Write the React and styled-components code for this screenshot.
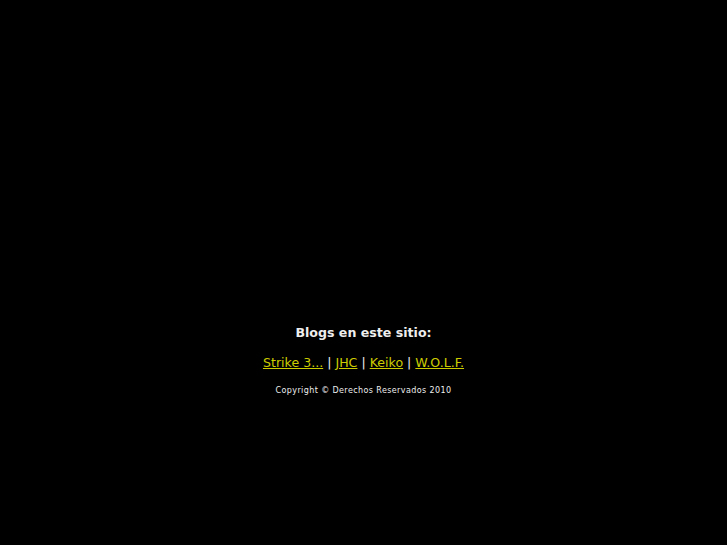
import React from 'react';
import styled, { createGlobalStyle } from 'styled-components';

const Global = createGlobalStyle`
  html, body {
    margin: 0;
    padding: 0;
    background: #000;
    height: 100%;
  }
  #root { min-height: 100%; }
`;

const Pagina = styled.main`
  width: 100%;
  min-height: 545px;
  display: flex;
  flex-direction: column;
  align-items: center;
  padding-top: 323px;
  box-sizing: border-box;
  font-family: "DejaVu Sans", Verdana, sans-serif;
  color: #eeeeee;
`;

const Titulo = styled.h3`
  margin: 0;
  font-size: 12.6px;
  font-weight: bold;
  line-height: 20px;
`;

const Enlaces = styled.p`
  margin: 10px 0 0 0;
  font-size: 12.6px;
  line-height: 20px;
  color: #eeeeee;
`;

const Enlace = styled.a`
  color: #cccc00;
  text-decoration: underline;
`;

const Copy = styled.p`
  margin: 12px 0 0 0;
  font-size: 8px;
  letter-spacing: 0.4px;
  line-height: 12px;
  color: #eeeeee;
`;

const blogs = ['Strike 3...', 'JHC', 'Keiko', 'W.O.L.F.'];

const App = () => (
  <>
    <Global />
    <Pagina>
      <Titulo>Blogs en este sitio:</Titulo>
      <Enlaces>
        {blogs.map((b, i) => (
          <React.Fragment key={b}>
            {i > 0 && ' | '}
            <Enlace href="#">{b}</Enlace>
          </React.Fragment>
        ))}
      </Enlaces>
      <Copy>Copyright © Derechos Reservados 2010</Copy>
    </Pagina>
  </>
);

export default App;
